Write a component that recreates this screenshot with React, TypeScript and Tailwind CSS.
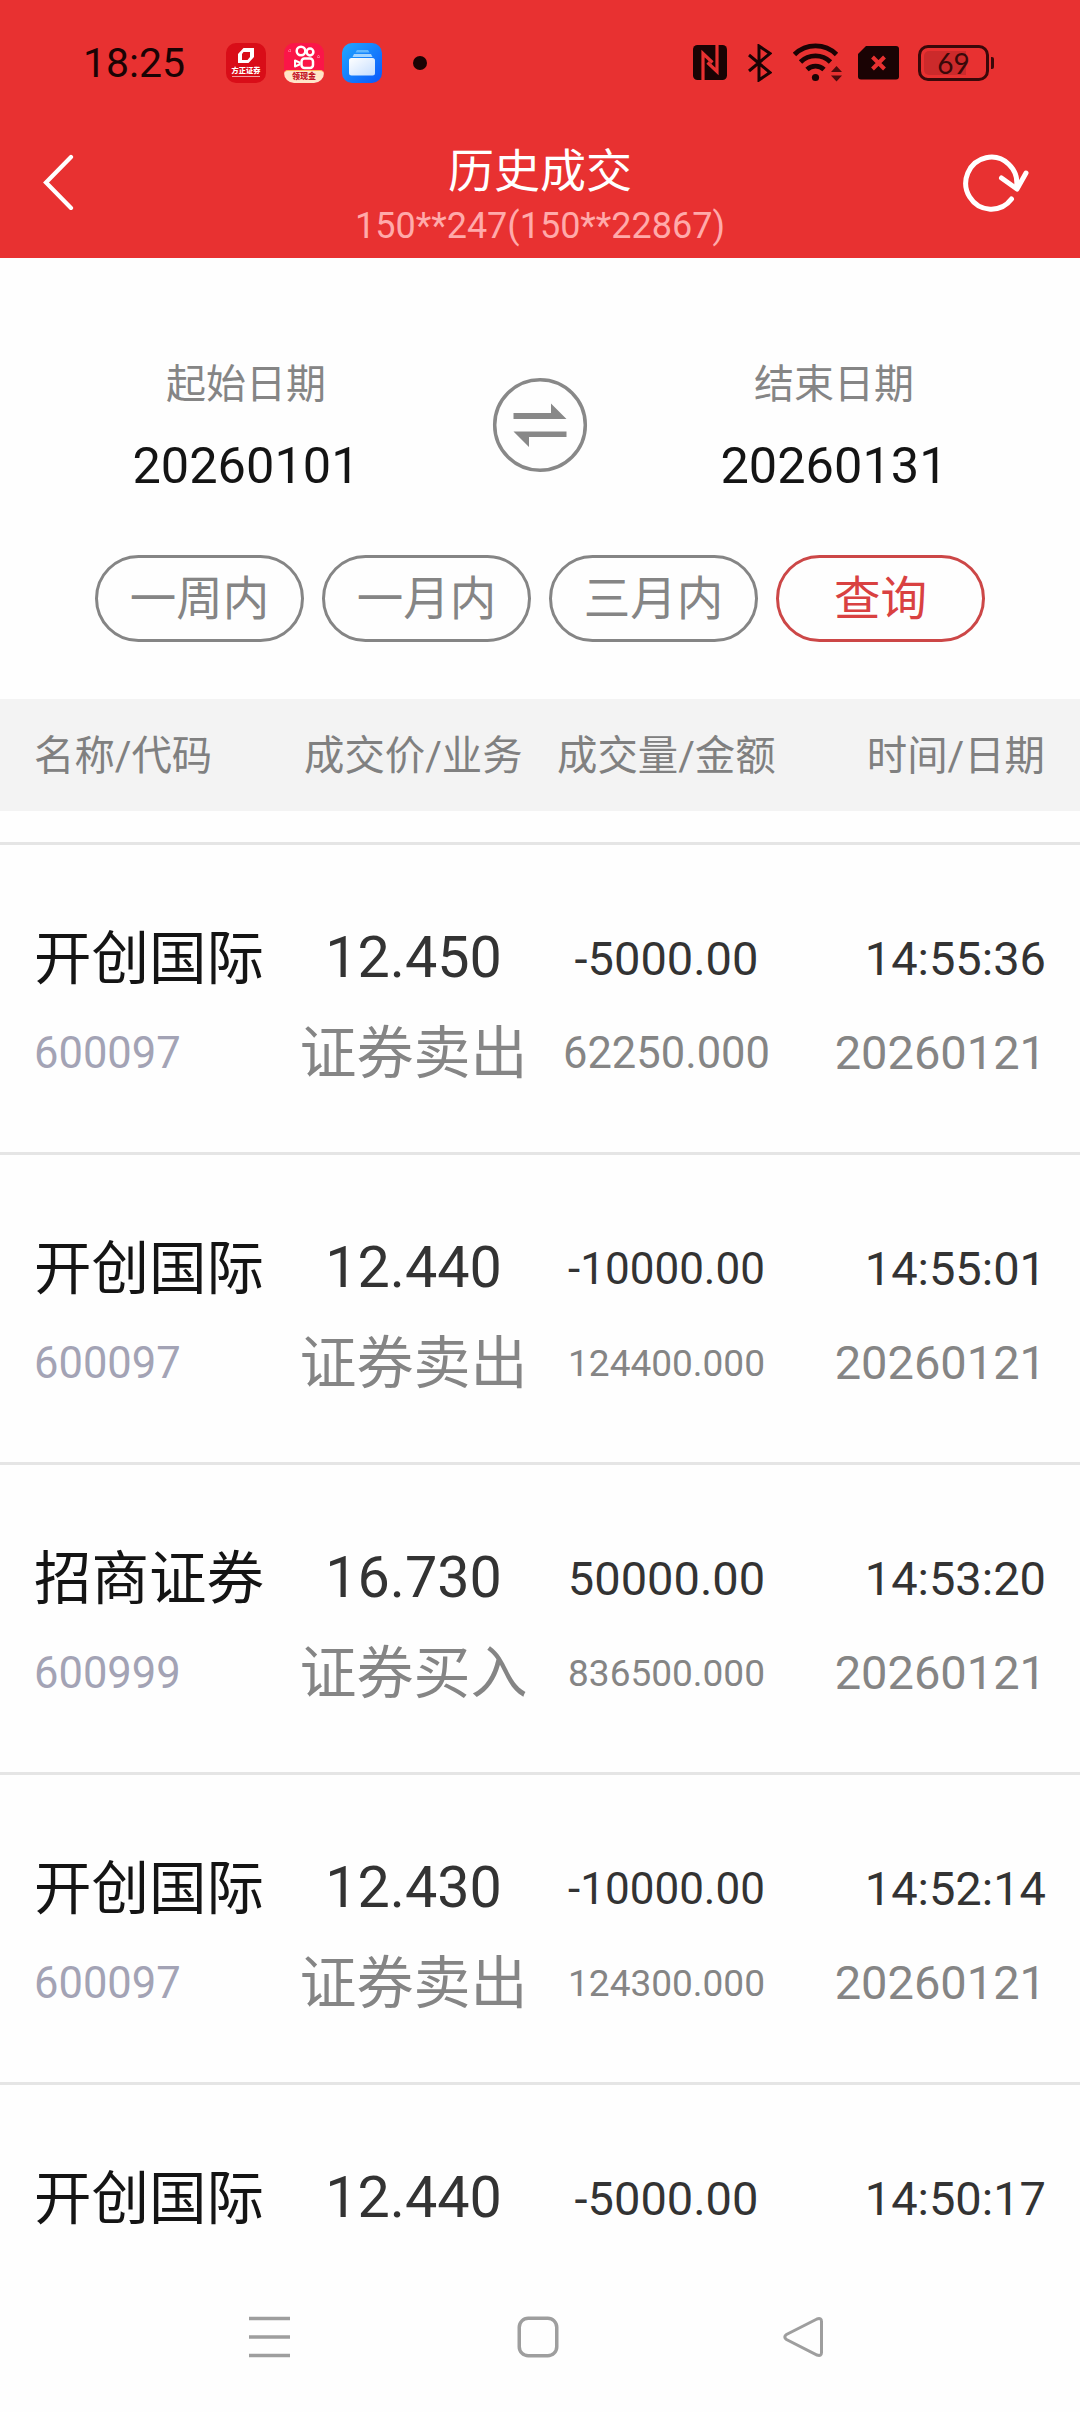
type Trade = {
  name: string;
  price: string;
  volume: string;
  time: string;
  detail?: {
    code: string;
    side: string;
    amount: string;
    date: string;
  };
};

const trades: Trade[] = [
  {
    name: "开创国际",
    price: "12.450",
    volume: "-5000.00",
    time: "14:55:36",
    detail: { code: "600097", side: "证券卖出", amount: "62250.000", date: "20260121" },
  },
  {
    name: "开创国际",
    price: "12.440",
    volume: "-10000.00",
    time: "14:55:01",
    detail: { code: "600097", side: "证券卖出", amount: "124400.000", date: "20260121" },
  },
  {
    name: "招商证券",
    price: "16.730",
    volume: "50000.00",
    time: "14:53:20",
    detail: { code: "600999", side: "证券买入", amount: "836500.000", date: "20260121" },
  },
  {
    name: "开创国际",
    price: "12.430",
    volume: "-10000.00",
    time: "14:52:14",
    detail: { code: "600097", side: "证券卖出", amount: "124300.000", date: "20260121" },
  },
  { name: "开创国际", price: "12.440", volume: "-5000.00", time: "14:50:17" },
];

const ranges = ["一周内", "一月内", "三月内"];

function BrokerIcon() {
  return (
    <div className="flex h-10 w-10 flex-col items-center rounded-[10px] bg-[#d90d18]">
      <svg aria-hidden="true" className="mt-[5px] h-4 w-4" fill="none" viewBox="0 0 16 16">
        <path d="M5.500 0H16v9l-5.500 6H0V6l5.500-6Z" fill="#fff" />
        <path d="M5.500 4H12v5l-2.500 3H4V6l1.500-2Z" fill="#d90d18" />
      </svg>
      <span className="mt-[3px] text-[7.200px] leading-[8px] font-black text-white">方正证券</span>
      <span className="mt-px h-px w-[28px] bg-[#f0a0a4]" />
    </div>
  );
}

function VideoIcon() {
  return (
    <div className="flex h-10 w-10 flex-col items-center overflow-hidden rounded-[10px] bg-[#fb1548]">
      <svg aria-hidden="true" className="h-[27px] w-10 shrink-0" fill="none" viewBox="0 0 40 27">
        <circle cx="17" cy="8" r="4.300" stroke="#fff" strokeWidth="2.500" />
        <circle cx="26" cy="9" r="3.400" stroke="#fff" strokeWidth="2.500" />
        <rect height="9.500" rx="3" stroke="#fff" strokeWidth="2.500" width="11.500" x="17.500" y="15.500" />
        <path d="M11 17.500v6l4.500-2v-2l-4.500-2Z" stroke="#fff" strokeLinejoin="round" strokeWidth="2" />
        <path d="M4 8h4M6 6v4M33 14h3M34.500 12v4" stroke="#ff7090" strokeDasharray="1 1" strokeWidth="1.500" />
      </svg>
      <div className="flex h-[13px] w-full items-center justify-center rounded-t-[4px] border-t border-[#ffb55c] bg-[#ffe6c8]">
        <span className="text-[8px] leading-[10px] font-black text-[#c31528]">领现金</span>
      </div>
    </div>
  );
}

function FilesIcon() {
  return (
    <svg aria-hidden="true" className="h-10 w-10" viewBox="0 0 40 40">
      <defs>
        <linearGradient id="files-bg" x1="0" x2="1" y1="0" y2="1">
          <stop offset="0" stopColor="#21a7ff" />
          <stop offset="1" stopColor="#0b57fb" />
        </linearGradient>
        <linearGradient id="files-card" x1="0" x2="1" y1="0" y2="1">
          <stop offset="0" stopColor="#fff" />
          <stop offset="1" stopColor="#c4ddff" />
        </linearGradient>
      </defs>
      <rect fill="url(#files-bg)" height="40" rx="10" width="40" />
      <path d="M15 7h11l1.500 2.500h-14L15 7Z" fill="#62b8ff" />
      <path d="M12 11h17l1.500 3h-20l1.500-3Z" fill="#a4d4ff" />
      <rect fill="url(#files-card)" height="17.500" rx="2.500" width="26" x="7" y="15" />
    </svg>
  );
}

function NfcIcon() {
  return (
    <svg aria-hidden="true" className="h-[35px] w-[34px]" viewBox="0 0 34 35">
      <rect fill="#1a0304" height="35" rx="4.500" width="34" />
      <path d="M10 35V8.500l9.500 9" fill="none" stroke="#e83131" strokeWidth="3.200" />
      <path d="M24 0v26.500l-9.500-9" fill="none" stroke="#e83131" strokeWidth="3.200" />
    </svg>
  );
}

function BluetoothIcon() {
  return (
    <svg aria-hidden="true" className="h-[38px] w-6" fill="none" viewBox="0 0 24 38">
      <path d="m1 11 21 17.500L11 36V2l11 7.500L1 27" stroke="#1a0304" strokeWidth="3" />
    </svg>
  );
}

function WifiIcon() {
  return (
    <svg aria-hidden="true" className="h-[39px] w-[50px]" fill="none" viewBox="0 0 50 39">
      <path
        d="M1.500 11.500a30 30 0 0 1 42 0M7.500 19a21.500 21.500 0 0 1 30 0M14 26.500a12.500 12.500 0 0 1 17 0"
        stroke="#1a0304"
        strokeWidth="4.800"
      />
      <circle cx="22.500" cy="34.500" fill="#1a0304" r="3.600" />
      <path d="m43.500 23 5.500 6H38l5.500-6Z" fill="#4d0b0d" />
      <path d="m43.500 38.500 5.500-6H38l5.500 6Z" fill="#4d0b0d" />
    </svg>
  );
}

function NoSimIcon() {
  return (
    <svg aria-hidden="true" className="h-[34px] w-[41px]" viewBox="0 0 41 34">
      <path d="M8 0h30a3 3 0 0 1 3 3v27.500a3 3 0 0 1-3 3H3a3 3 0 0 1-3-3V8l8-8Z" fill="#1a0304" />
      <path d="m14.500 11 12 12m0-12-12 12" stroke="#e83131" strokeWidth="4" />
    </svg>
  );
}

function Battery() {
  return (
    <div className="flex items-center gap-[2px]">
      <div className="relative flex h-9 w-[71px] items-center justify-center rounded-[10px] border-[3px] border-[#3a0809]">
        <span className="absolute top-[3px] bottom-[3px] left-[3px] w-[42px] rounded-l-[5px] bg-[#cc2a2b]" />
        <span className="relative font-['Lato',sans-serif] text-[28px] leading-none text-[#3a0809]">69</span>
      </div>
      <span className="h-3 w-[3px] rounded-r-[2px] bg-[#3a0809]" />
    </div>
  );
}

function StatusBar() {
  return (
    <div className="flex h-[125px] items-center pl-[83px]">
      <span className="w-[143px] pt-[2px] text-[41px] leading-none text-[#1a0304]">18:25</span>
      <div className="flex items-center gap-[18px]">
        <BrokerIcon />
        <VideoIcon />
        <FilesIcon />
      </div>
      <span className="ml-[31px] h-3.5 w-3.5 rounded-full bg-[#1a0304]" />
      <div className="ml-[266px] flex items-center">
        <NfcIcon />
        <div className="ml-[21px]"><BluetoothIcon /></div>
        <div className="ml-[21px]"><WifiIcon /></div>
        <div className="ml-[15px]"><NoSimIcon /></div>
        <div className="ml-[19px]"><Battery /></div>
      </div>
    </div>
  );
}

function TitleBar() {
  return (
    <div className="flex h-[133px] items-start justify-between pr-[46px] pl-[42px]">
      <button aria-label="返回" className="mt-[29px]" type="button">
        <svg aria-hidden="true" className="h-14 w-[76px]" fill="none" viewBox="0 0 76 56">
          <path d="M29 3 4 28.500 29 54" stroke="#fff" strokeLinecap="round" strokeWidth="4.200" />
        </svg>
      </button>
      <div className="flex flex-col items-center">
        <h1 className="mt-[19px] text-[46px] leading-[54px] font-normal text-white">历史成交</h1>
        <p className="mt-[6px] text-[36px] leading-[44px] text-[#ffaaaa]">150**247(150**22867)</p>
      </div>
      <button aria-label="刷新" className="mt-[28px]" type="button">
        <svg aria-hidden="true" className="h-[60px] w-[72px]" fill="none" viewBox="0 0 72 60">
          <path d="M49.500 46A25.500 26 0 1 1 54.500 34" stroke="#fff" strokeLinecap="round" strokeWidth="5" />
          <path
            d="m39.500 25 15.500 11 9-16"
            stroke="#fff"
            strokeLinecap="round"
            strokeLinejoin="round"
            strokeWidth="5"
          />
        </svg>
      </button>
    </div>
  );
}

function DateField({ label, value }: { label: string; value: string }) {
  return (
    <div className="flex flex-1 flex-col items-center">
      <span className="text-[40px] leading-[50px] text-[#858585]">{label}</span>
      <span className="mt-[26px] text-[50.500px] leading-[60px] text-[#141414]">{value}</span>
    </div>
  );
}

function SwapIcon() {
  return (
    <svg aria-hidden="true" className="h-24 w-24" fill="none" viewBox="0 0 96 96">
      <circle cx="48" cy="48" r="45.300" stroke="#888" strokeWidth="3.500" />
      <path d="M21.500 36H59v-9.500L74.500 42h-53v-6ZM74.500 54.500v5.500H37v10L21.500 54.500h53Z" fill="#888" />
    </svg>
  );
}

function Filters() {
  return (
    <section className="flex h-[441px] flex-col">
      <div className="flex pt-[102px]">
        <DateField label="起始日期" value="20260101" />
        <button aria-label="交换" className="mt-[17px] h-24 w-24" type="button">
          <SwapIcon />
        </button>
        <DateField label="结束日期" value="20260131" />
      </div>
      <div className="mt-[59px] flex justify-center gap-[18px]">
        {ranges.map((range) => (
          <button
            key={range}
            className="h-[87px] w-[209px] rounded-full border-3 border-[#858585] pt-[2px] text-[46.500px] leading-none text-[#858585]"
            type="button"
          >
            {range}
          </button>
        ))}
        <button
          className="h-[87px] w-[209px] rounded-full border-3 border-[#cc4747] pt-[2px] text-[46.500px] leading-none text-[#d94141]"
          type="button"
        >
          查询
        </button>
      </div>
    </section>
  );
}

// long figures shrink so they stay inside their column
function volumeSize(text: string) {
  return text.length > 8 ? "text-[44px]" : "text-[47px]";
}

function amountSize(text: string) {
  return text.length > 9 ? "text-[37px]" : "text-[43.500px]";
}

function TradeRow({ trade }: { trade: Trade }) {
  const { detail } = trade;

  return (
    <li className="grid h-[310px] shrink-0 grid-cols-[264px_299px_206px_1fr] border-t-3 border-[#e5e5e5] pt-[78px] pr-[34px] pl-[34px]">
      <div className="flex flex-col gap-[24px]">
        <span className="h-[70px] text-[57.500px] leading-[74px] whitespace-nowrap text-[#141414]">{trade.name}</span>
        {detail ? <span className="h-[70px] text-[43.500px] leading-[74px] text-[#a3a3b5]">{detail.code}</span> : null}
      </div>
      <div className="flex flex-col items-center gap-[24px] pr-[68px] whitespace-nowrap">
        <span className="h-[70px] text-[57.500px] leading-[70px] text-[#333333]">{trade.price}</span>
        {detail ? <span className="h-[70px] text-[57px] leading-[74px] text-[#858585]">{detail.side}</span> : null}
      </div>
      <div className="-ml-[67px] flex flex-col items-center gap-[24px] whitespace-nowrap">
        <span className={`h-[70px] leading-[72px] text-[#333333] ${volumeSize(trade.volume)}`}>{trade.volume}</span>
        {detail ? (
          <span className={`h-[70px] leading-[73px] text-[#858585] ${amountSize(detail.amount)}`}>{detail.amount}</span>
        ) : null}
      </div>
      <div className="flex flex-col items-end gap-[24px]">
        <span className="h-[70px] text-[47px] leading-[71px] text-[#333333]">{trade.time}</span>
        {detail ? <span className="h-[70px] text-[47px] leading-[72px] text-[#858585]">{detail.date}</span> : null}
      </div>
    </li>
  );
}

function TableHead() {
  return (
    <div className="flex h-28 items-center bg-[#f3f3f3] pt-[4px] pr-[35px] pl-[34px] text-[40.400px] leading-none text-[#808080]">
      <span className="w-[270px]">名称/代码</span>
      <span className="w-[253px]">成交价/业务</span>
      <span>成交量/金额</span>
      <span className="ml-auto">时间/日期</span>
    </div>
  );
}

function NavBar() {
  return (
    <nav className="flex h-[148px] items-center bg-[#fefefe] pb-[2px] pl-[247px]">
      <svg aria-hidden="true" className="h-11 w-11" fill="none" viewBox="0 0 44 44">
        <path d="M2 3.500h41M2 22h41M2 40.500h41" stroke="#9e9e9e" strokeWidth="3.500" />
      </svg>
      <svg aria-hidden="true" className="ml-[225px] h-11 w-11" fill="none" viewBox="0 0 44 44">
        <rect height="37.500" rx="9" stroke="#9e9e9e" strokeWidth="3.500" width="37.500" x="3.250" y="3.250" />
      </svg>
      <svg aria-hidden="true" className="ml-[221px] h-11 w-11" fill="none" viewBox="0 0 44 44">
        <path
          d="M36 4 5.500 19.500q-3.500 2.500 0 5L36 40q4.500 1.500 4.500-2.500V6.500Q40.500 2.500 36 4Z"
          stroke="#9e9e9e"
          strokeWidth="3"
        />
      </svg>
    </nav>
  );
}

export default function App() {
  return (
    <main className="flex h-[2412px] w-[1080px] flex-col overflow-hidden bg-[#fefefe] font-['Roboto','Noto_Sans_CJK_SC',sans-serif]">
      <header className="h-[258px] shrink-0 bg-[#e83131]">
        <StatusBar />
        <TitleBar />
      </header>
      <Filters />
      <TableHead />
      <ul className="mt-[31px] flex h-[1422px] shrink-0 flex-col overflow-hidden">
        {trades.map((trade) => (
          <TradeRow key={trade.time} trade={trade} />
        ))}
      </ul>
      <NavBar />
    </main>
  );
}
